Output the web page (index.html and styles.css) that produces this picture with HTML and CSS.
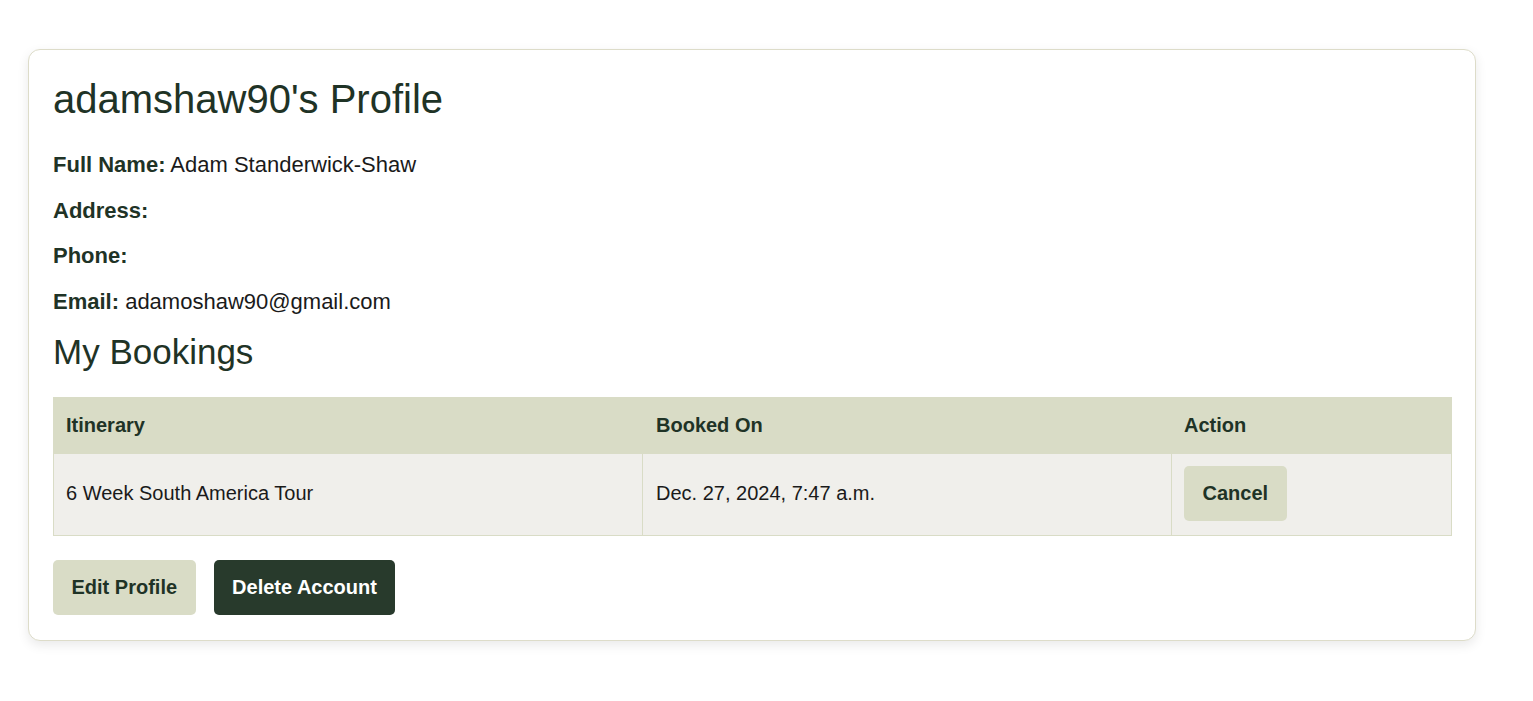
FILE: index.html
```html
<!DOCTYPE html>
<html lang="en">
<head>
<meta charset="utf-8">
<title>adamshaw90's Profile</title>
<link rel="stylesheet" href="styles.css">
</head>
<body>
<main class="page">
  <section class="card">
    <h1 class="title">adamshaw90's Profile</h1>
    <p class="info"><strong>Full Name:</strong> Adam Standerwick-Shaw</p>
    <p class="info"><strong>Address:</strong> </p>
    <p class="info"><strong>Phone:</strong> </p>
    <p class="info"><strong>Email:</strong> adamoshaw90@gmail.com</p>
    <h2 class="subtitle">My Bookings</h2>
    <table class="bookings">
      <colgroup>
        <col class="col-itin">
        <col class="col-date">
        <col class="col-action">
      </colgroup>
      <thead>
        <tr>
          <th>Itinerary</th>
          <th class="cell-date">Booked On</th>
          <th>Action</th>
        </tr>
      </thead>
      <tbody>
        <tr>
          <td>6 Week South America Tour</td>
          <td class="cell-date">Dec. 27, 2024, 7:47 a.m.</td>
          <td><button class="btn btn-light" type="button">Cancel</button></td>
        </tr>
      </tbody>
    </table>
    <div class="actions">
      <button class="btn btn-light" type="button">Edit Profile</button>
      <button class="btn btn-dark" type="button">Delete Account</button>
    </div>
  </section>
</main>
</body>
</html>
```

FILE: styles.css
```css
* {
  box-sizing: border-box;
}

html, body {
  margin: 0;
  padding: 0;
  background: #ffffff;
}

body {
  font-family: "Liberation Sans", Arial, Helvetica, sans-serif;
  color: #1a1a1a;
  font-size: 20px;
}

.page {
  padding: 49px 0 40px 28px;
}

.card {
  width: 1448px;
  background: #ffffff;
  border: 1px solid #dddcc9;
  border-radius: 12px;
  padding: 24px 24px 25px 24px;
  box-shadow: 0 4px 12px rgba(0, 0, 0, 0.09);
}

.title {
  margin: 3px 0 30px 0;
  font-size: 40px;
  font-weight: 400;
  line-height: normal;
  color: #1f3326;
}

.info {
  margin: 0 0 19.5px 0;
  font-size: 22px;
  line-height: normal;
  color: #1a1a1a;
}

.info strong {
  color: #1f3326;
}

.info:last-of-type {
  margin-bottom: 17px;
}

.subtitle {
  margin: 0 0 25px 0;
  font-size: 35px;
  font-weight: 400;
  line-height: normal;
  color: #1f3326;
}

.bookings {
  width: 1398px;
  border-collapse: collapse;
  table-layout: fixed;
}

.col-itin { width: 589px; }
.col-date { width: 529px; }
.col-action { width: 280px; }

.bookings th,
.bookings td {
  border: 1px solid #d9dcc6;
  text-align: left;
  line-height: normal;
  font-size: 20px;
}

.bookings th {
  background: #d9dcc6;
  color: #1f3326;
  font-weight: 700;
  padding: 16px 12px;
}

.bookings td {
  background: #f0efeb;
  color: #1a1a1a;
  padding: 12px 12px 14px 12px;
  vertical-align: middle;
}

.bookings .cell-date {
  padding-left: 13px;
}

.btn {
  display: inline-block;
  font-family: "Liberation Sans", Arial, Helvetica, sans-serif;
  font-size: 20px;
  font-weight: 700;
  line-height: 23px;
  padding: 16px 18.5px;
  border: none;
  border-radius: 5px;
  cursor: pointer;
  vertical-align: middle;
}

.btn-light {
  background: #d9dcc6;
  color: #1f3326;
}

.btn-dark {
  background: #283a2c;
  color: #ffffff;
}

.actions {
  display: flex;
  gap: 18px;
  margin-top: 24px;
}
```
